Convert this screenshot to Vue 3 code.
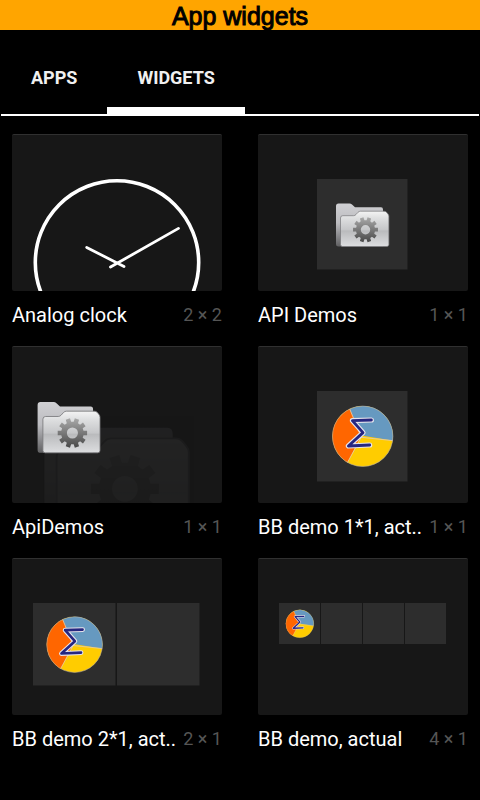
<script setup>
import { ref } from 'vue'

const tabs = ['Apps', 'Widgets']
const active = ref('Widgets')

const widgets = [
  { name: 'Analog clock', size: '2 × 2', kind: 'clock' },
  { name: 'API Demos', size: '1 × 1', kind: 'folder' },
  { name: 'ApiDemos', size: '1 × 1', kind: 'ghost' },
  { name: 'BB demo 1*1, act..', size: '1 × 1', kind: 'pie', cell: 90, cells: 1, left: 59, pie: 'translate(104.7 90.3)' },
  { name: 'BB demo 2*1, act..', size: '2 × 1', kind: 'pie', cell: 82, cells: 2, left: 21, pie: 'translate(62.6 86.6) scale(.92)' },
  { name: 'BB demo, actual', size: '4 × 1', kind: 'pie', cell: 41, cells: 4, left: 21, pie: 'translate(41.8 65.8) scale(.46)' },
]

// Ten-toothed gear centred on the origin, with a round hole.
function gearPath(outer, inner, hole) {
  const points = []
  for (let i = 0; i < 10; i++) {
    const mid = (i * Math.PI) / 5
    for (const [offset, r] of [[-0.2, inner], [-0.15, outer], [0.15, outer], [0.2, inner]]) {
      points.push(`${(Math.cos(mid + offset) * r).toFixed(2)} ${(Math.sin(mid + offset) * r).toFixed(2)}`)
    }
  }
  return `M${points.join('L')}Z M${hole} 0A${hole} ${hole} 0 1 0 ${-hole} 0A${hole} ${hole} 0 1 0 ${hole} 0Z`
}
const gear = gearPath(12.6, 9.6, 4.7)
</script>

<template>
  <div class="screen">
    <svg class="defs" aria-hidden="true">
      <defs>
        <linearGradient id="back" x1="0" y1="0" x2="0" y2="1">
          <stop offset="0" stop-color="#d0d0d3" />
          <stop offset=".45" stop-color="#bcbcc0" />
          <stop offset="1" stop-color="#606062" />
        </linearGradient>
        <linearGradient id="front" x1="0" y1="0" x2="0" y2="1">
          <stop offset="0" stop-color="#f4f4f4" />
          <stop offset=".2" stop-color="#dedfe0" />
          <stop offset=".52" stop-color="#c6c7c9" />
          <stop offset=".56" stop-color="#babbbd" />
          <stop offset="1" stop-color="#dddee0" />
        </linearGradient>
        <linearGradient id="gear" x1="0" y1="0" x2="0" y2="1">
          <stop offset="0" stop-color="#a9a9a9" />
          <stop offset="1" stop-color="#484848" />
        </linearGradient>
        <g id="folder-icon">
          <path d="M.5 3Q.5.5 3 .5H14Q15.500 .5 16.500 1.500L19.500 4.300H45.500Q47.500 4.300 47.500 6.500V43.500H3Q.5 43.500 .5 41Z" fill="url(#back)" />
          <path d="M5 15Q5 12.700 7.300 12.700H18Q19.500 12.700 20.500 11.500L22.500 9.300Q23.500 8.200 25 8.200H48.500Q50 8.200 51 9.200L52.500 11Q53.400 12 53.400 13.500V41.500Q53.400 43.500 51.400 43.500H7Q5 43.500 5 41.500Z" fill="url(#front)" stroke="#77777a" stroke-width=".7" />
          <path :d="gear" transform="translate(30 26.7)" fill="url(#gear)" fill-rule="evenodd" />
        </g>
        <g id="pie-icon">
          <circle r="30.300" fill="#ffcc00" />
          <path d="M-1.500 -.7L-13 -27.400A30.300 30.300 0 0 1 30 4.300Z" fill="#6699c0" />
          <path d="M-1.500 -.7L-13 -27.400A30.300 30.300 0 0 0 -15.200 26.200Z" fill="#ff6600" />
          <path d="M-13 -27.400L-1.500 1L-15.200 26.200M-1.500 1L30 4.300" fill="none" stroke="#e3cdbb" stroke-width=".8" />
          <circle r="30.200" fill="none" stroke="#b9b0a0" stroke-width=".6" />
          <g fill="none" stroke-linecap="round" stroke-linejoin="round">
            <path d="M8.700 -16.300L-10.300 -15.700L.3 -3.700L-14.300 9.700L7 8.700" stroke="#e6e3ea" stroke-width="5.200" />
            <path d="M8.700 -16.300L-10.300 -15.700L.3 -3.700L-14.300 9.700L7 8.700" stroke="#262680" stroke-width="2.800" />
          </g>
        </g>
      </defs>
    </svg>

    <header class="banner"><h1>App widgets</h1></header>

    <nav class="tabs">
      <button
        v-for="tab in tabs"
        :key="tab"
        type="button"
        class="tab"
        :class="{ active: tab === active }"
        @click="active = tab"
      >{{ tab }}</button>
    </nav>

    <main class="grid">
      <article v-for="w in widgets" :key="w.name">
        <div class="preview">
          <svg viewBox="0 0 210 156" aria-hidden="true">
            <g v-if="w.kind === 'clock'" fill="none" stroke="#fff" stroke-linecap="round">
              <circle cx="105" cy="127.500" r="81.700" stroke-width="3.600" />
              <path d="M74.700 112.400L112 131.600M98.500 132L166.500 93.400" stroke-width="2.800" />
            </g>
            <template v-else-if="w.kind === 'folder'">
              <rect x="59" y="44" width="90.500" height="90.500" fill="#2d2d2d" />
              <use href="#folder-icon" transform="translate(77.500 68)" />
            </template>
            <template v-else-if="w.kind === 'ghost'">
              <use href="#folder-icon" opacity=".055" transform="translate(31 69) scale(2.730)" />
              <use href="#folder-icon" transform="translate(25 54.500) scale(1.180)" />
            </template>
            <g v-else transform="translate(0 -1)">
              <rect
                v-for="n in w.cells"
                :key="n"
                :x="w.left + (n - 1) * (w.cell + (w.cells === 2 ? 2 : 1))"
                y="45"
                :width="w.cell + (w.cells === 4 ? 0 : 0.5)"
                :height="w.cell + (w.cells === 4 ? 0 : 0.5)"
                fill="#2d2d2d"
              />
              <use href="#pie-icon" :transform="w.pie" />
            </g>
          </svg>
        </div>
        <div class="caption">
          <h2>{{ w.name }}</h2>
          <span>{{ w.size }}</span>
        </div>
      </article>
    </main>
  </div>
</template>

<style>
body {
  background: #000;
}
</style>

<style scoped>
.screen {
  min-height: 100vh;
  background: #000;
  color: #fff;
  font-family: Roboto, sans-serif;
}
.defs {
  position: absolute;
  width: 0;
  height: 0;
}
.banner {
  height: 30px;
  background: #ffa500;
  overflow: hidden;
}
.banner h1 {
  margin: 0;
  font: 400 25px/32px "Liberation Sans", sans-serif;
  text-align: center;
  color: #000;
  -webkit-text-stroke: 1px #000;
}
.tabs {
  display: flex;
  height: 84px;
  margin: 0 1px;
  border-bottom: 2px solid #fff;
}
.tab {
  padding: 19px 30px 0;
  border: 0;
  border-bottom: 7px solid transparent;
  background: none;
  color: #f0f0f0;
  font: 700 18px/24px Roboto, sans-serif;
  text-transform: uppercase;
}
.tab.active {
  border-bottom-color: #fff;
}
.grid {
  display: grid;
  grid-template-columns: repeat(2, minmax(0, 1fr));
  gap: 15px 36px;
  padding: 18px 12px;
}
.preview {
  border-top: 1px solid #303030;
  border-radius: 2px;
  background: #171717;
  overflow: hidden;
}
.preview svg {
  display: block;
  width: 100%;
}
.caption {
  display: flex;
  align-items: center;
  justify-content: space-between;
  gap: 6px;
  padding-top: 8px;
  line-height: 32px;
  white-space: nowrap;
}
.caption h2 {
  margin: 0;
  font-size: 20px;
  font-weight: 400;
}
.caption span {
  color: #555;
  font-size: 18px;
}
</style>
